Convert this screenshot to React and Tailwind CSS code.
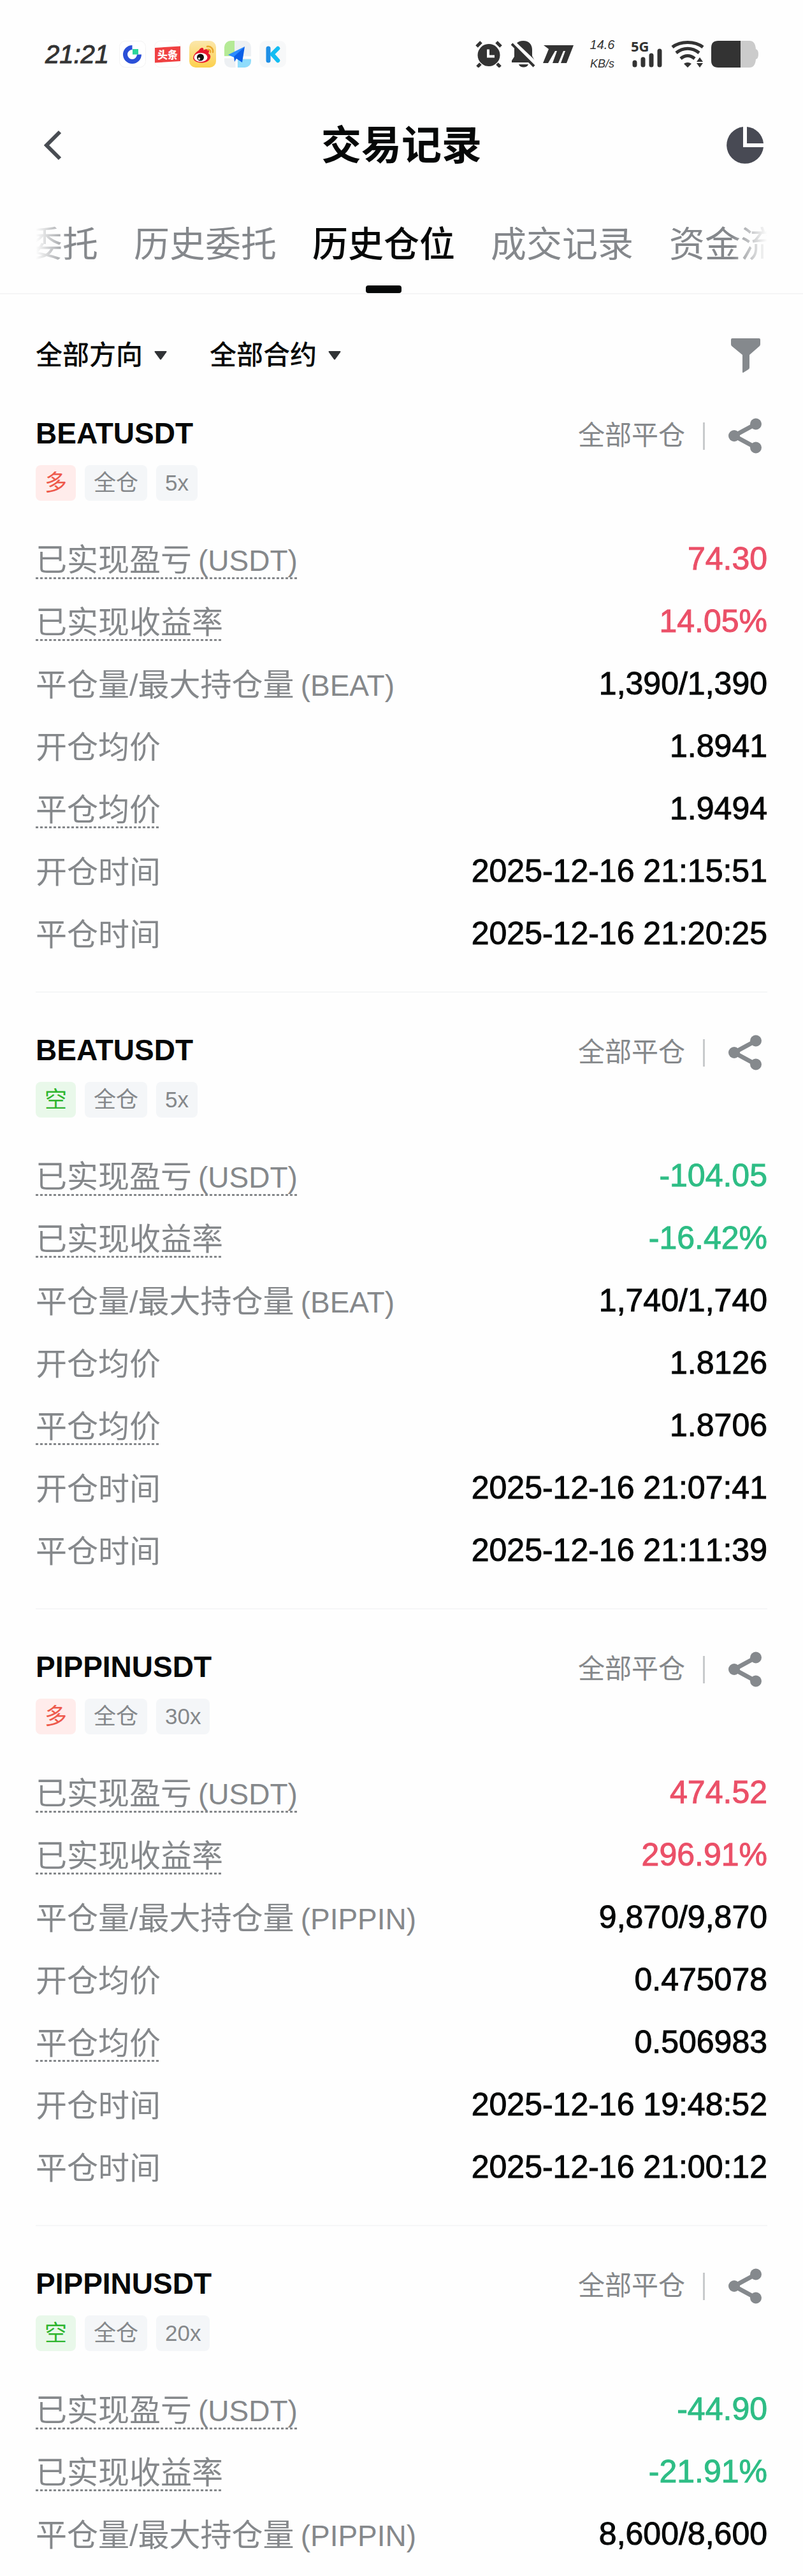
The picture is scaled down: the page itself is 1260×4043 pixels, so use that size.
import React from "react";

const TABS = ["当前委托", "历史委托", "历史仓位", "成交记录", "资金流水"];

const POSITIONS = [
  {
    symbol: "BEATUSDT",
    coin: "BEAT",
    side: "long",
    leverage: "5x",
    pnl: "74.30",
    roi: "14.05%",
    volume: "1,390/1,390",
    open: "1.8941",
    close: "1.9494",
    openedAt: "2025-12-16 21:15:51",
    closedAt: "2025-12-16 21:20:25",
  },
  {
    symbol: "BEATUSDT",
    coin: "BEAT",
    side: "short",
    leverage: "5x",
    pnl: "-104.05",
    roi: "-16.42%",
    volume: "1,740/1,740",
    open: "1.8126",
    close: "1.8706",
    openedAt: "2025-12-16 21:07:41",
    closedAt: "2025-12-16 21:11:39",
  },
  {
    symbol: "PIPPINUSDT",
    coin: "PIPPIN",
    side: "long",
    leverage: "30x",
    pnl: "474.52",
    roi: "296.91%",
    volume: "9,870/9,870",
    open: "0.475078",
    close: "0.506983",
    openedAt: "2025-12-16 19:48:52",
    closedAt: "2025-12-16 21:00:12",
  },
  {
    symbol: "PIPPINUSDT",
    coin: "PIPPIN",
    side: "short",
    leverage: "20x",
    pnl: "-44.90",
    roi: "-21.91%",
    volume: "8,600/8,600",
  },
];

/* ---- status bar ---- */

function AppIcons() {
  return (
    <div className="flex items-center gap-[13px]" aria-hidden="true">
      <svg viewBox="0 0 42 42" className="size-[42px]">
        <rect x="0.5" y="0.5" width="41" height="41" rx="9" fill="#fff" stroke="#f3f3f3" />
        <path d="M20.500 10.500 A11 11 0 1 0 31.500 21.500" fill="none" stroke="#2b50d8" strokeWidth="7" />
        <rect x="21" y="13" width="9" height="8.500" fill="#2bd69a" />
      </svg>
      <svg viewBox="0 0 42 42" className="size-[42px]">
        <rect x="0.5" y="0.5" width="41" height="41" rx="9" fill="#fff" stroke="#f6f6f6" />
        <path d="M1 11 L41 8.500 V32 L1 34.500 Z" fill="#f04142" />
        <text x="21" y="28" textAnchor="middle" fontSize="16" fontWeight="900" fill="#fff" fontFamily="'Noto Sans CJK SC', sans-serif">
          头条
        </text>
      </svg>
      <svg viewBox="0 0 42 42" className="size-[42px]">
        <defs>
          <linearGradient id="weibo" x1="0" y1="0" x2="0" y2="1">
            <stop offset="0" stopColor="#fbe7ac" />
            <stop offset="1" stopColor="#fcd04c" />
          </linearGradient>
        </defs>
        <rect width="42" height="42" rx="10" fill="url(#weibo)" />
        <path
          d="M15 15 C17 11 21 10 22 12 C23 14 22 15 22 15 C26 12 32 13 31 17 L30 20 C34 22 34 26 32 29 C27 36 14 36 8 31 C4 27 7 20 15 15Z"
          fill="#e6162d"
        />
        <ellipse cx="18" cy="26" rx="10.500" ry="7" fill="#fff" />
        <circle cx="17.500" cy="26" r="5.500" fill="#111" />
        <circle cx="15.500" cy="28" r="1.700" fill="#fff" />
        <path d="M28 9 C34 8 38 13 37 18 M29 14 C32 13 34 16 33 18" fill="none" stroke="#e9a52c" strokeWidth="2.500" strokeLinecap="round" />
      </svg>
      <svg viewBox="0 0 42 42" className="size-[42px]">
        <defs>
          <clipPath id="map-clip">
            <rect width="42" height="42" rx="10" />
          </clipPath>
        </defs>
        <g clipPath="url(#map-clip)">
          <rect width="42" height="42" fill="#edf0f3" />
          <rect width="16" height="24" fill="#b5ea96" />
          <rect x="21" y="29" width="21" height="13" fill="#8fdcfb" />
          <path d="M0 26 H42 M19 26 V42" stroke="#fff" strokeWidth="3" />
        </g>
        <path d="M32 9 L6 22 L15 26 Z" fill="#2b8cff" />
        <path d="M32 9 L15 25 L16 33 L19 28 L28 34 Z" fill="#0a5fe8" />
      </svg>
      <svg viewBox="0 0 42 42" className="size-[42px]">
        <rect width="42" height="42" rx="10" fill="#f7f8f9" />
        <path d="M14 12 V31" stroke="#1f8fe6" strokeWidth="7" strokeLinecap="round" />
        <path d="M29 12 L20 21 L29 31" fill="none" stroke="#14bdf2" strokeWidth="6.500" strokeLinecap="round" strokeLinejoin="round" />
      </svg>
    </div>
  );
}

function StatusBar() {
  return (
    <div className="flex h-[170px] items-center justify-between pr-[70px] pl-[71px] text-[#333]">
      <div className="flex items-center gap-4">
        <span className="text-[40px] leading-[42px] italic [-webkit-text-stroke:1px]">21:21</span>
        <AppIcons />
      </div>

      <div className="flex items-center">
        {/* alarm */}
        <svg viewBox="0 0 42 42" className="size-[42px]" aria-hidden="true">
          <circle cx="21" cy="22.500" r="17.500" fill="#333" />
          <path d="M2 9 L9 2 M33 2 L40 9 M8 36 L3 41 M34 36 L39 41" stroke="#333" strokeWidth="5" />
          <path d="M20 13.500 V24.500 H30" fill="none" stroke="#fff" strokeWidth="4" />
        </svg>
        {/* muted */}
        <svg viewBox="0 0 38 42" className="ml-[14px] h-[42px] w-[38px]" aria-hidden="true">
          <path d="M19 0 C28 0 33 6 33 14 V24 L37 31 V34 H1 V31 L5 25 V14 C5 6 10 0 19 0Z" fill="#333" />
          <path d="M12 37 H27 C25 43 14 43 12 37Z" fill="#333" />
          <path d="M1 0 L40 37" stroke="#fefefe" strokeWidth="6" />
          <path d="M1 5 L36 40" stroke="#333" strokeWidth="4" />
        </svg>
        <svg viewBox="0 0 48 28" className="ml-[12px] h-[28px] w-[48px]" aria-hidden="true">
          <path d="M1 0 H48 L37 28 H28 L35 9 H32 L24 28 H15 L22 9 H19 L8 28 H0 L9 6Z" fill="#333" />
        </svg>
        <div className="ml-6 flex w-[42px] flex-col items-center gap-[10px] leading-[20px] italic">
          <span className="text-[20px]">14.6</span>
          <span className="text-[18px]">KB/s</span>
        </div>
        {/* signal */}
        <div className="ml-6 flex h-[42px] w-[50px] flex-col">
          <span className="h-[14px] font-['Open_Sans',sans-serif] text-[22px] leading-[16px] font-bold">5G</span>
          <svg viewBox="0 0 50 30" className="-mt-[2px] h-[30px] w-[50px]" aria-hidden="true">
            <path d="M6 22 V26 M19 17 V26 M32 11 V26 M45 4 V26" stroke="#333" strokeWidth="7" strokeLinecap="round" />
          </svg>
        </div>
        <svg viewBox="0 0 52 42" className="ml-[13px] h-[42px] w-[52px]" aria-hidden="true">
          <path d="M2 10 C15 0 37 0 50 10 M8 19 C19 10 33 10 44 19 M15 28 C22 22 30 22 37 28" fill="none" stroke="#333" strokeWidth="5" />
          <path d="M20 36 Q26 32 32 36 L26 42Z M40 33 L45 26 L50 33Z M40 35 L45 42 L50 35Z" fill="#333" />
        </svg>
        <svg viewBox="0 0 74 42" className="ml-[11px] h-[42px] w-[74px]" aria-hidden="true">
          <path d="M46 0 H60 Q69 0 70 13 Q74 14 74 21 Q74 28 70 29 Q69 42 60 42 H46Z" fill="#cbcbcb" />
          <path d="M11 0 H46 V42 H11 Q0 42 0 31 V11 Q0 0 11 0Z" fill="#333" />
        </svg>
      </div>
    </div>
  );
}

/* ---- page header ---- */

function Header() {
  return (
    <header className="grid h-[116px] grid-cols-[1fr_auto_1fr] items-center px-[62px]">
      <button type="button" aria-label="返回" className="justify-self-start">
        <svg viewBox="0 0 48 48" className="size-12" aria-hidden="true">
          <path d="M32 3 L11 24 L32 45" fill="none" stroke="#484c52" strokeWidth="6" />
        </svg>
      </button>
      <h1 className="text-[63px] leading-[80px] font-bold">交易记录</h1>
      <button type="button" aria-label="统计" className="justify-self-end">
        <svg viewBox="0 0 58 58" className="size-[58px]" aria-hidden="true">
          <path d="M26 0 A29 29 0 1 0 58 32 H26Z" fill="#484a54" />
          <path d="M32 0 A29 29 0 0 1 58 26 H32Z" fill="#484a54" />
        </svg>
      </button>
    </header>
  );
}

function Tabs({ active }) {
  return (
    <nav className="border-b-2 border-[#f5f5f6] px-14">
      <div className="overflow-hidden [mask-image:linear-gradient(90deg,transparent,#000_56px,#000_calc(100%-56px),transparent)]">
        {/* scrolled so that the active tab sits in view */}
        <div className="-ml-[126px] flex gap-14">
          {TABS.map((tab) => (
            <button
              key={tab}
              type="button"
              aria-current={tab === active ? "page" : undefined}
              className={
                "flex h-[174px] shrink-0 flex-col items-center justify-end text-[56px] leading-[80px] " +
                (tab === active ? "font-medium text-[#060808]" : "text-[#85888c]")
              }
            >
              {tab}
              <span className={"mt-6 h-3 w-14 rounded-[4px] " + (tab === active ? "bg-[#060808]" : "")} />
            </button>
          ))}
        </div>
      </div>
    </nav>
  );
}

function FilterSelect({ label, value }) {
  return (
    <label className="flex items-center gap-[18px]">
      <select aria-label={label} className="field-sizing-content appearance-none bg-transparent text-[42px] leading-[60px] font-medium">
        <option>{value}</option>
      </select>
      <svg viewBox="0 0 20 14" className="h-[14px] w-5" aria-hidden="true">
        <path d="M1 0 H19 Q20 1 19 2 L11 13 Q10 14 9 13 L1 2 Q0 1 1 0Z" fill="#303336" />
      </svg>
    </label>
  );
}

function Filters() {
  return (
    <div className="flex items-center gap-[67px] px-14 pt-[66px] pb-[2px]">
      <FilterSelect label="方向" value="全部方向" />
      <FilterSelect label="合约" value="全部合约" />
      <button type="button" aria-label="筛选" className="mr-[10px] ml-auto">
        <svg viewBox="0 0 48 56" className="h-14 w-12" aria-hidden="true">
          <path d="M3 1 H45 Q47 1 47 3 V10 Q47 12 46 13 L30 27 V47 Q30 49 28 50 L20 55 Q19 55 19 54 V27 L2 13 Q1 12 1 10 V3 Q1 1 3 1Z" fill="#85898d" />
        </svg>
      </button>
    </div>
  );
}

/* ---- position card ---- */

function Row({ label, value, hint = false, tone = "text-[#060808]" }) {
  return (
    <div className="flex h-[98px] items-center justify-between">
      <dt
        className={
          "text-[49px] leading-[58px] text-[#85888b] " +
          (hint
            ? "bg-[repeating-linear-gradient(90deg,#85888b_0_4px,transparent_4px_7px)] bg-[length:100%_3px] bg-bottom bg-no-repeat"
            : "")
        }
      >
        {label}
      </dt>
      <dd className={"pb-1 text-[50px] leading-[58px] [font-kerning:none] [-webkit-text-stroke:1px] " + tone}>{value}</dd>
    </div>
  );
}

function Unit({ children }) {
  return <span className="ml-[10px] text-[46px]">({children})</span>;
}

function PositionCard({ p }) {
  const isLong = p.side === "long";
  const tone = p.pnl.startsWith("-") ? "text-[#2ebd85]" : "text-[#eb5068]";

  return (
    <article className="border-b-2 border-[#f5f6f7] pt-15 pb-10 last:border-b-0 last:pb-0">
      <div className="flex h-15 items-center">
        <h2 className="text-[46px] leading-[60px] font-bold">{p.symbol}</h2>
        <div className="mr-[9px] ml-auto flex items-center pt-2">
          <span className="text-[42px] leading-[60px] text-[#85888b]">全部平仓</span>
          <span className="ml-7 h-[43px] w-[3px] bg-[#c8cacc]" />
          <button type="button" aria-label="分享" className="ml-[37px]">
            <svg viewBox="0 0 52 56" className="h-14 w-13" aria-hidden="true">
              <path d="M43 9.500 L9 28 L43 46.500" fill="none" stroke="#85898d" strokeWidth="7" />
              <circle cx="43" cy="9.500" r="9" fill="#85898d" />
              <circle cx="9" cy="28" r="9" fill="#85898d" />
              <circle cx="43" cy="46.500" r="9" fill="#85898d" />
            </svg>
          </button>
        </div>
      </div>

      <div className="mt-5 flex gap-[14px] text-[35px] leading-[56px] text-[#85888b]">
        <span className={"rounded-lg px-[14px] " + (isLong ? "bg-[#ffeceb] text-[#ee5a4c]" : "bg-[#e9f8ea] text-[#2fb52f]")}>
          {isLong ? "多" : "空"}
        </span>
        <span className="rounded-lg bg-[#f4f6f8] px-[14px]">全仓</span>
        <span className="rounded-lg bg-[#f4f6f8] px-[14px]">{p.leverage}</span>
      </div>

      <dl className="mt-11">
        <Row hint label={<>已实现盈亏<Unit>USDT</Unit></>} value={p.pnl} tone={tone} />
        <Row hint label="已实现收益率" value={p.roi} tone={tone} />
        <Row label={<>平仓量/最大持仓量<Unit>{p.coin}</Unit></>} value={p.volume} />
        {p.open && <Row label="开仓均价" value={p.open} />}
        {p.close && <Row hint label="平仓均价" value={p.close} />}
        {p.openedAt && <Row label="开仓时间" value={p.openedAt} />}
        {p.closedAt && <Row label="平仓时间" value={p.closedAt} />}
      </dl>
    </article>
  );
}

export default function App() {
  return (
    <div className="min-h-screen w-full bg-[#fefefe] font-['Liberation_Sans','Noto_Sans_CJK_SC',sans-serif] text-[#060808]" lang="zh-CN">
      <StatusBar />
      <Header />
      <Tabs active="历史仓位" />
      <Filters />
      <main className="px-14">
        {POSITIONS.map((p, i) => (
          <PositionCard key={i} p={p} />
        ))}
      </main>
    </div>
  );
}
